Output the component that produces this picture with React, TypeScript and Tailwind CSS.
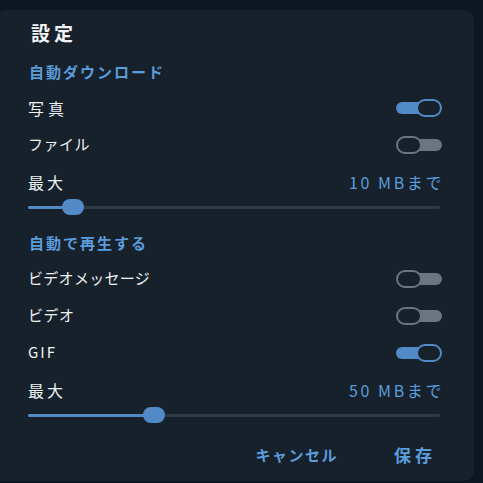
import React from "react";

const font = { fontFamily: '"Noto Sans CJK JP", "Noto Sans", sans-serif' };

function Toggle({ on }: { on: boolean }) {
  return on ? (
    <div className="relative w-[46px] h-[18px] flex items-center">
      <div className="w-[44px] h-[12px] rounded-full bg-[#5289c7]" />
      <div className="absolute right-0 top-0 w-[26px] h-[18px] rounded-full border-[2px] border-[#5289c7] bg-[#17212b]" />
    </div>
  ) : (
    <div className="relative w-[46px] h-[18px] flex items-center justify-end">
      <div className="w-[44px] h-[12px] rounded-full bg-[#6b7581]" />
      <div className="absolute left-0 top-0 w-[26px] h-[18px] rounded-full border-[2px] border-[#6b7581] bg-[#17212b]" />
    </div>
  );
}

function Slider({ pct }: { pct: number }) {
  return (
    <div className="h-[14px] relative flex items-center mr-[2px]">
      <div className="w-full h-[3px] rounded-full bg-[#2f3a46]" />
      <div className="absolute left-0 h-[3px] rounded-full bg-[#5289c7]" style={{ width: `${pct}%` }} />
      <div
        className="absolute w-[22px] h-[16px] rounded-full bg-[#5289c7] -translate-x-1/2"
        style={{ left: `${pct}%` }}
      />
    </div>
  );
}

function Row({ label, on, track }: { label: string; on: boolean; track: string }) {
  return (
    <div className="h-[37px] flex items-center justify-between">
      <span className={`text-[15px] text-[#eef0f2] ${track}`}>{label}</span>
      <Toggle on={on} />
    </div>
  );
}

function MaxRow({ value }: { value: string }) {
  return (
    <div className="h-[37px] flex items-center justify-between">
      <span className="text-[16px] text-[#eef0f2] tracking-[3px]">最大</span>
      <span className="text-[16px] text-[#5b9ddc] tracking-[2.6px] -mr-[2px]">{value}</span>
    </div>
  );
}

export default function App() {
  return (
    <div className="w-[483px] h-[483px] bg-[#0e1621] overflow-hidden" style={font}>
      <div className="mt-[10px] w-[474px] h-[471px] bg-[#17212b] rounded-r-[10px] rounded-tl-[4px] flex flex-col pl-[28px] pr-[32px]">
        <div className="h-[46px] flex items-center pl-[3px]">
          <span className="text-[19px] font-bold text-[#f2f4f6] tracking-[4px]">設定</span>
        </div>
        <div className="h-[33px] flex items-center pl-[1px]">
          <span className="text-[15px] font-semibold text-[#5b9ddc] tracking-[2px]">自動ダウンロード</span>
        </div>
        <Row label="写真" on={true} track="tracking-[4px] text-[16px]" />
        <Row label="ファイル" on={false} track="tracking-[0.5px]" />
        <MaxRow value="10 MBまで" />
        <Slider pct={11} />
        <div className="mt-[12px] h-[34px] flex items-center pl-[1px]">
          <span className="text-[15px] font-semibold text-[#5b9ddc] tracking-[2px]">自動で再生する</span>
        </div>
        <Row label="ビデオメッセージ" on={false} track="tracking-[0.3px]" />
        <Row label="ビデオ" on={false} track="tracking-[0.5px]" />
        <Row label="GIF" on={true} track="tracking-[2px]" />
        <MaxRow value="50 MBまで" />
        <Slider pct={30.5} />
        <div className="mt-[14px] h-[38px] flex items-center justify-end gap-[56px] pr-[6px]">
          <span className="text-[15px] font-bold text-[#5b9ddc] tracking-[1.5px]">キャンセル</span>
          <span className="text-[17px] font-bold text-[#5b9ddc] tracking-[4px]">保存</span>
        </div>
      </div>
    </div>
  );
}
